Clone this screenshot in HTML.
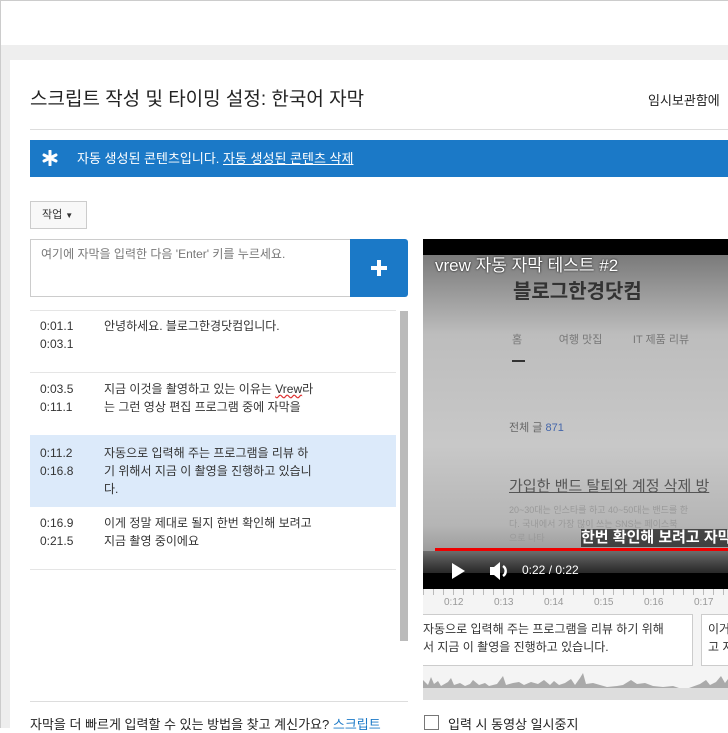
<!DOCTYPE html>
<html><head><meta charset="utf-8"><style>
*{margin:0;padding:0;box-sizing:border-box}
body{width:728px;height:728px;overflow:hidden;background:#fff;font-family:"Liberation Sans","Noto Sans CJK KR",sans-serif;position:relative;color:#222}
.a{position:absolute}
.t{font-size:12px;color:#333;line-height:18px}
</style></head><body>
<div class="a" style="left:0;top:0;width:728px;height:45px;border-top:1px solid #ccc;border-left:1px solid #ccc;background:#fff"></div>
<div class="a" style="left:0;top:45px;width:728px;height:15px;background:#eee;border-left:1px solid #ccc"></div>
<div class="a" style="left:0;top:45px;width:10px;height:683px;background:#eee;border-left:1px solid #ccc"></div>
<div class="a" style="left:30px;top:84px;font-size:19px;color:#222">스크립트 작성 및 타이밍 설정: 한국어 자막</div>
<div class="a" style="left:648px;top:90px;font-size:13px;color:#222;white-space:nowrap">임시보관함에</div>
<div class="a" style="left:30px;top:129px;width:698px;height:1px;background:#ddd"></div>
<div class="a" style="left:30px;top:140px;width:698px;height:37px;background:#1b79c7;color:#fff;font-size:13px;line-height:37px;padding-left:47px;white-space:nowrap">자동 생성된 콘텐츠입니다. <u>자동 생성된 콘텐츠 삭제</u></div>
<svg class="a" style="left:42px;top:150px" width="16" height="16"><g stroke="#fff" stroke-width="3" stroke-linecap="round"><path d="M8 1V15M2 5L14 11M14 5L2 11"/></g></svg>
<div class="a" style="left:30px;top:201px;width:57px;height:28px;border:1px solid #ccc;background:#f8f8f8;font-size:11px;line-height:26px;padding-left:11px;color:#333">작업 <span style="font-size:8px">▼</span></div>
<div class="a" style="left:30px;top:239px;width:321px;height:58px;border:1px solid #ccc;border-right:none;font-size:12px;color:#777;padding:5px 10px">여기에 자막을 입력한 다음 'Enter' 키를 누르세요.</div>
<div class="a" style="left:350px;top:239px;width:58px;height:58px;background:#1b79c7;border-radius:0 3px 3px 0"></div>
<div class="a" style="left:371px;top:266px;width:16px;height:4px;background:#fff"></div>
<div class="a" style="left:377px;top:260px;width:4px;height:16px;background:#fff"></div>
<div class="a" style="left:30px;top:310px;width:366px;height:1px;background:#e5e5e5"></div>
<div class="a" style="left:400px;top:311px;width:8px;height:330px;background:#bbb"></div>
<div class="a" style="left:30px;top:372px;width:366px;height:1px;background:#e5e5e5"></div>
<div class="a" style="left:30px;top:435px;width:366px;height:72px;background:#dceafa"></div>
<div class="a" style="left:30px;top:569px;width:366px;height:1px;background:#e5e5e5"></div>
<div class="a t" style="left:40px;top:317px">0:01.1<br>0:03.1</div>
<div class="a t" style="left:104px;top:317px">안녕하세요. 블로그한경닷컴입니다.</div>
<div class="a t" style="left:40px;top:380px">0:03.5<br>0:11.1</div>
<div class="a t" style="left:104px;top:380px;width:250px">지금 이것을 촬영하고 있는 이유는 <span style="text-decoration:underline wavy #d33">Vrew</span>라<br>는 그런 영상 편집 프로그램 중에 자막을</div>
<div class="a t" style="left:40px;top:444px">0:11.2<br>0:16.8</div>
<div class="a t" style="left:104px;top:444px">자동으로 입력해 주는 프로그램을 리뷰 하<br>기 위해서 지금 이 촬영을 진행하고 있습니<br>다.</div>
<div class="a t" style="left:40px;top:514px">0:16.9<br>0:21.5</div>
<div class="a t" style="left:104px;top:514px">이게 정말 제대로 될지 한번 확인해 보려고<br>지금 촬영 중이에요</div>
<div class="a" style="left:30px;top:701px;width:378px;height:1px;background:#ddd"></div>
<div class="a" style="left:30px;top:714px;font-size:13px;white-space:nowrap">자막을 더 빠르게 입력할 수 있는 방법을 찾고 계신가요? <span style="color:#1b79c7">스크립트</span></div>
<!-- video -->
<div class="a" style="left:423px;top:239px;width:305px;height:350px;background:#000;overflow:hidden">
 <div class="a" style="left:0;top:16px;width:305px;height:318px;background:linear-gradient(#7a7a7a,#bdbdbd 25%,#c8c8c8 60%,#b5b5b5 85%,#888)"></div>
 <div class="a" style="left:90px;top:36px;font-size:20px;color:#333;font-weight:bold">블로그한경닷컴</div>
 <div class="a" style="left:89px;top:92px;font-size:11px;color:#777;white-space:nowrap">홈&nbsp;&nbsp;&nbsp;&nbsp;&nbsp;&nbsp;&nbsp;&nbsp;&nbsp;&nbsp;&nbsp;&nbsp;여행 맛집&nbsp;&nbsp;&nbsp;&nbsp;&nbsp;&nbsp;&nbsp;&nbsp;&nbsp;&nbsp;IT 제품 리뷰</div>
 <div class="a" style="left:89px;top:121px;width:13px;height:2px;background:#333"></div>
 <div class="a" style="left:86px;top:180px;font-size:11px;color:#666">전체 글 <span style="color:#46a">871</span></div>
 <div class="a" style="left:86px;top:236px;font-size:15px;color:#555;text-decoration:underline;white-space:nowrap">가입한 밴드 탈퇴와 계정 삭제 방</div>
 <div class="a" style="left:86px;top:264px;font-size:9px;color:#999;white-space:nowrap;line-height:14px">20~30대는 인스타를 하고 40~50대는 밴드를 한<br>다. 국내에서 가장 많이 쓰는 SNS는 페이스북<br>으로 나타</div>
 <div class="a" style="left:12px;top:12px;font-size:17px;color:#fff;white-space:nowrap;text-shadow:0 0 2px #000">vrew 자동 자막 테스트 #2</div>
 <div class="a" style="left:158px;top:290px;font-size:15px;color:#fff;font-weight:bold;background:rgba(0,0,0,.6);white-space:nowrap;line-height:18px">한번 확인해 보려고 자막</div>
 <div class="a" style="left:12px;top:309px;width:293px;height:3px;background:#e00"></div>
 <div class="a" style="left:0;top:312px;width:305px;height:38px;background:linear-gradient(rgba(0,0,0,.3),#000)"></div>
 <svg class="a" style="left:26px;top:322px" width="70" height="20"><path d="M3 2 L16 10 L3 18Z" fill="#fff"/><path d="M41 6h4l6-5v18l-6-5h-4z" fill="#fff"/><path d="M54 5a6 6 0 0 1 0 10" stroke="#fff" stroke-width="2.5" fill="none"/></svg>
 <div class="a" style="left:99px;top:324px;font-size:12px;color:#fff">0:22 / 0:22</div>
</div>
<div class="a" style="left:423px;top:589px;width:305px;height:111px;background:#f4f4f4"></div>
<div class="a" style="left:423px;top:589px;width:305px;height:6px;background:repeating-linear-gradient(90deg,#bbb 0 1px,transparent 1px 10px)"></div>
<div class="a" style="left:423px;top:597px;width:305px;font-size:10px;color:#999;white-space:nowrap">
<span class="a" style="left:21px">0:12</span><span class="a" style="left:71px">0:13</span><span class="a" style="left:121px">0:14</span><span class="a" style="left:171px">0:15</span><span class="a" style="left:221px">0:16</span><span class="a" style="left:271px">0:17</span></div>
<div class="a" style="left:423px;top:614px;width:270px;height:52px;background:#fff;border:1px solid #ccc;border-left:none;font-size:12px;color:#333;line-height:18px;padding:5px 0 0 0;white-space:nowrap;overflow:hidden">자동으로 입력해 주는 프로그램을 리뷰 하기 위해<br>서 지금 이 촬영을 진행하고 있습니다.</div>
<div class="a" style="left:701px;top:614px;width:30px;height:52px;background:#fff;border:1px solid #ccc;font-size:12px;color:#333;line-height:18px;padding:5px 0 0 6px;white-space:nowrap;overflow:hidden">이거<br>고 지</div>
<svg class="a" style="left:423px;top:668px" width="305" height="32"><rect x="0" y="20" width="305" height="12" fill="#ddd"/><path d="M0 20 L0 12 L5 17 L8 9 L11 16 L15 13 L18 18 L25 14 L28 10 L31 17 L37 15 L42 18 L47 16 L50 12 L56 17 L62 15 L66 18 L74 16 L80 8 L83 17 L90 15 L96 14 L101 17 L108 14 L115 16 L121 12 L127 17 L131 13 L136 17 L142 15 L148 11 L152 17 L157 10 L160 5 L163 16 L170 15 L177 17 L184 19 L194 18 L200 17 L208 12 L214 16 L222 15 L230 18 L240 19 L250 18 L256 20 L266 20 L277 16 L283 12 L287 17 L293 14 L298 8 L302 15 L305 11 L305 20Z" fill="#aaa"/></svg>
<div class="a" style="left:424px;top:715px;width:15px;height:15px;border:1px solid #777"></div>
<div class="a" style="left:448px;top:714px;font-size:13px;white-space:nowrap">입력 시 동영상 일시중지</div>
</body></html>
